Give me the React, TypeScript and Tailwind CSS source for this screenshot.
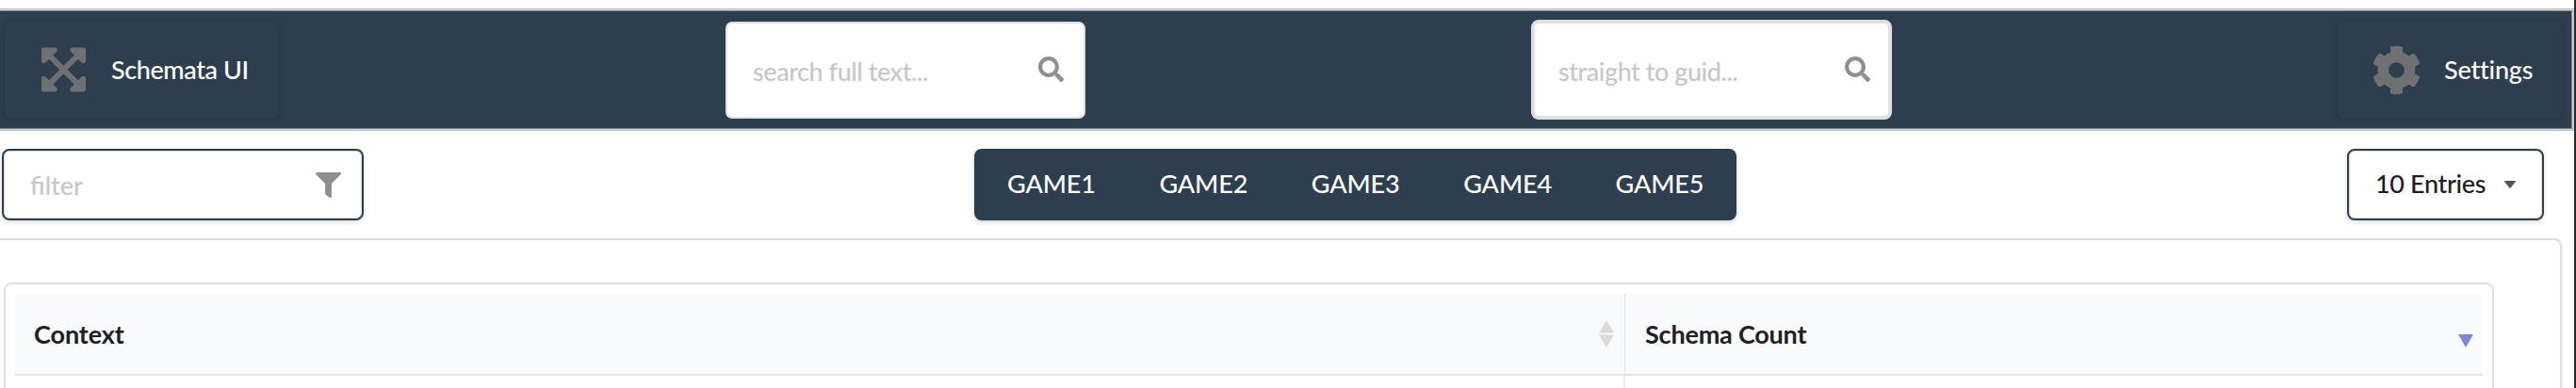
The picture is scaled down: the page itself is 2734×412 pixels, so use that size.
import type { ReactNode } from "react";
import { FaExpandArrowsAlt, FaCog, FaSearch, FaFilter } from "react-icons/fa";

const games = ["GAME1", "GAME2", "GAME3", "GAME4", "GAME5"];

function BarButton({ children, className }: { children: ReactNode; className: string }) {
  return (
    <button
      className={`flex h-[106px] items-center rounded-[8px] border border-[#2a3848] font-medium text-white shadow-[0_2px_4px_rgba(34,36,38,0.12)] ${className}`}
    >
      {children}
    </button>
  );
}

function SearchBox({ label, className }: { label: string; className: string }) {
  return (
    <div className={`flex items-center justify-between bg-white font-medium tracking-[-0.45px] text-[#c7c7c7] ${className}`}>
      <span className="relative top-[2px]">{label}</span>
      <FaSearch className="relative -top-px size-[27px] text-[#8f8f8f]" />
    </div>
  );
}

export default function App() {
  return (
    <div className="flex h-[412px] w-[2734px] overflow-hidden bg-white font-['Lato',sans-serif] text-[27px] leading-[34px] text-[#1f2021]">
      <div className="flex w-[2732px] flex-col">
        <header className="mt-[9px] flex h-[130px] shrink-0 items-center bg-[#2d3e4e] pl-[4px] shadow-[inset_-1px_1px_0_#b9babb,inset_0_-1px_0_#b9babb,inset_-2px_2px_0_#d8dadb,inset_0_-2px_0_#d8dadb,inset_-3px_3px_0_#7b8590,inset_0_-3px_0_#7b8590]">
          <BarButton className="w-[292px] pl-[39px]">
            <FaExpandArrowsAlt className="h-[54px] w-[47px] text-[#6f7072]" />
            <span className="ml-[27px] tracking-[-0.4px]">Schemata UI</span>
          </BarButton>
          <SearchBox
            label="search full text..."
            className="ml-[474px] h-[103px] w-[382px] rounded-[7px] border-2 border-[#e0e0e0] pl-[27px] pr-[21px]"
          />
          <SearchBox
            label="straight to guid..."
            className="ml-[473px] h-[106px] w-[383px] rounded-[8px] border-4 border-[#e0e0e0] pl-[25px] pr-[19px]"
          />
          <BarButton className="ml-[472px] w-[240px] pl-[36px]">
            <FaCog className="size-[53px] text-[#6f7072]" />
            <span className="ml-[24px] tracking-[-0.2px]">Settings</span>
          </BarButton>
        </header>

        <div className="mt-[19px] flex h-[76px] shrink-0 items-center pl-[2px]">
          <div className="flex h-[76px] w-[384px] items-center justify-between rounded-[8px] border-2 border-[#2d3e4e] pl-[28px] pr-[22px] shadow-[0_2px_4px_rgba(34,36,38,0.15),inset_0_0_0_1px_#dededf]">
            <span className="relative top-px font-medium text-[#c7c7c7]">filter</span>
            <FaFilter className="size-[27px] text-[#8f8f8f]" />
          </div>
          <nav className="ml-[648px] flex h-[76px] w-[809px] items-center rounded-[8px] bg-[#2d3e4e] pb-[3px] font-medium tracking-[-0.1px] text-white shadow-[0_2px_4px_rgba(34,36,38,0.2)]">
            {games.map((game) => (
              <a key={game} className="w-[161.4px] shrink-0 pl-[35px]">
                {game}
              </a>
            ))}
          </nav>
          <button className="ml-[648px] flex h-[76px] w-[209px] items-center rounded-[8px] border-2 border-[#2d3e4e] pl-[28px] shadow-[0_2px_4px_rgba(34,36,38,0.15),inset_0_0_0_1px_#dededf]">
            <span className="w-[136px] pb-[3px] text-left font-medium tracking-[-0.35px]">10 Entries</span>
            <svg viewBox="0 0 14 8" className="h-[8px] w-[14px]" fill="#545455">
              <path d="M0.5 0H13.5L7.6 7.4Q7 8 6.4 7.4Z" />
            </svg>
          </button>
        </div>

        <main className="mt-[19px] mr-[13px] flex h-[180px] shrink-0 rounded-tr-[8px] border-t-2 border-r-2 border-[#dfdfe0] pl-[4px] pt-[45px] shadow-[0_2px_4px_rgba(34,36,38,0.12)]">
          <div className="h-[140px] w-[2643px] rounded-t-[8px] border-2 border-[#dfdfe0] px-[10px] pt-[10px]">
            <div className="flex h-[128px] flex-col">
              <div className="flex h-[87px] shrink-0 rounded-t-[6px] border-b-2 border-[#e3e4e5] bg-[#f9fafb] font-bold">
                <div className="flex w-[1708px] items-center justify-between pl-[20px] pr-[11px]">
                  <span className="tracking-[-0.1px]">Context</span>
                  <svg viewBox="0 0 16 29" className="h-[29px] w-[16px]" fill="#dadada">
                    <path d="M8 0L16 13.5H0ZM0 15.5H16L8 29Z" />
                  </svg>
                </div>
                <div className="flex flex-1 items-center justify-between border-l border-[#dfe0e1] pl-[21px] pr-[10px]">
                  <span className="tracking-[-0.2px]">Schema Count</span>
                  <svg viewBox="0 0 16 14" className="relative top-[7px] h-[14px] w-[16px]" fill="#7f85dd">
                    <path d="M0 0H16L8 14Z" />
                  </svg>
                </div>
              </div>
              <div className="flex flex-1">
                <div className="w-[1707px]" />
                <div className="flex-1 border-l-2 border-[#ececed]" />
              </div>
            </div>
          </div>
        </main>
      </div>
      <div className="w-[2px] bg-[#2a2a2b]" />
    </div>
  );
}
